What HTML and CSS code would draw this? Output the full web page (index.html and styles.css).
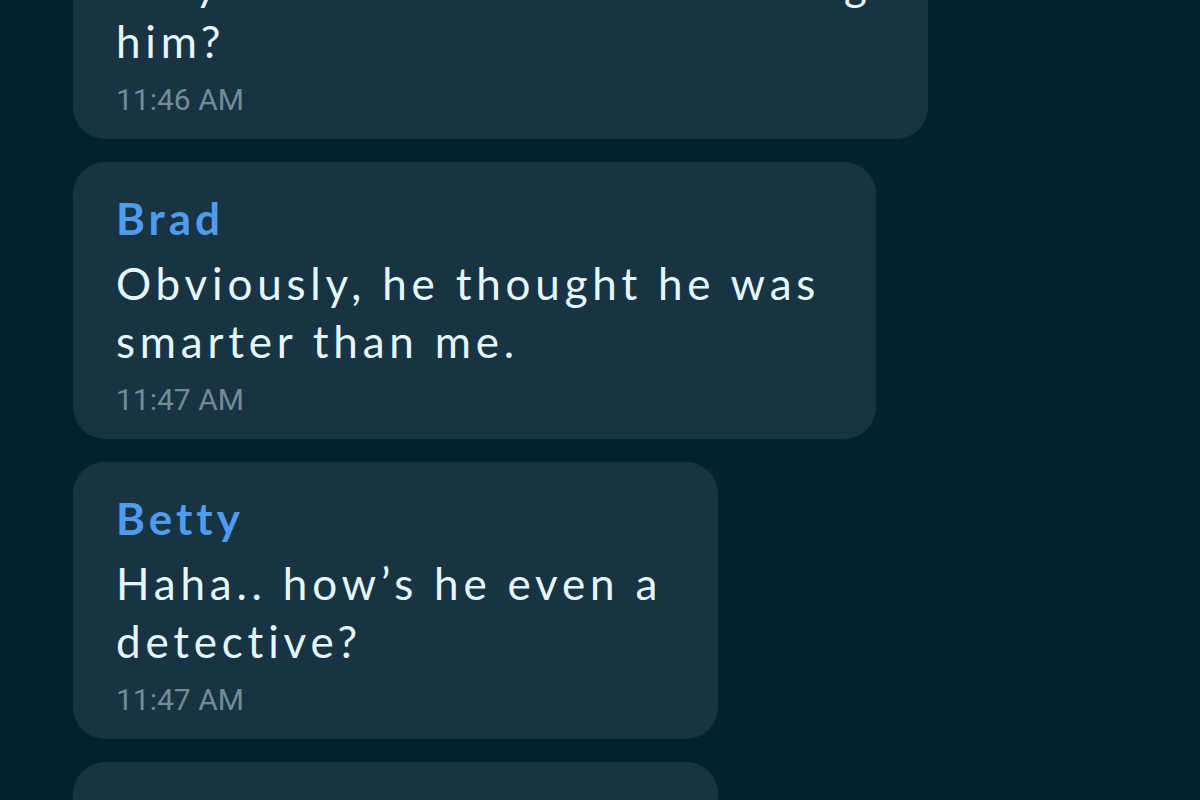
FILE: index.html
```html
<!DOCTYPE html>
<html>
<head>
<meta charset="utf-8">
<link rel="stylesheet" href="styles.css">
</head>
<body>
<div class="chat">
  <div class="bubble">
    <div class="name">Betty</div>
    <div class="text">Why would he think of catching<br>him?</div>
    <div class="time">11:46 AM</div>
  </div>
  <div class="bubble">
    <div class="name">Brad</div>
    <div class="text">Obviously, he thought he was<br>smarter than me.</div>
    <div class="time">11:47 AM</div>
  </div>
  <div class="bubble">
    <div class="name">Betty</div>
    <div class="text">Haha.. how’s he even a<br>detective?</div>
    <div class="time">11:47 AM</div>
  </div>
  <div class="bubble">
    <div class="name">Brad</div>
    <div class="text">He just got lucky, I bet<br>that’s all.</div>
    <div class="time">11:48 AM</div>
  </div>
</div>
</body>
</html>
```

FILE: styles.css
```css
html, body {
  margin: 0;
  padding: 0;
  height: 100%;
  overflow: hidden;
}
body {
  background: #022230;
  font-family: "Lato", "Noto Sans", sans-serif;
}
.chat {
  display: flex;
  flex-direction: column;
  align-items: flex-start;
  gap: 23px;
  padding-left: 73px;
  margin-top: -138px;
}
.bubble {
  background: #183442;
  border-radius: 32px;
  padding: 27px 56px 21px 43px;
  width: fit-content;
  box-sizing: border-box;
}
.name {
  color: #4f9bee;
  font-size: 44px;
  line-height: 58px;
  font-weight: 700;
  letter-spacing: 4px;
  margin-bottom: 7px;
  white-space: nowrap;
}
.text {
  color: #e4f7fc;
  font-size: 44px;
  line-height: 58px;
  font-weight: 400;
  letter-spacing: 4.8px;
  white-space: nowrap;
}
.time {
  color: #728c97;
  font-family: "Roboto", sans-serif;
  font-size: 30px;
  line-height: 36px;
  margin-top: 12px;
}
```
